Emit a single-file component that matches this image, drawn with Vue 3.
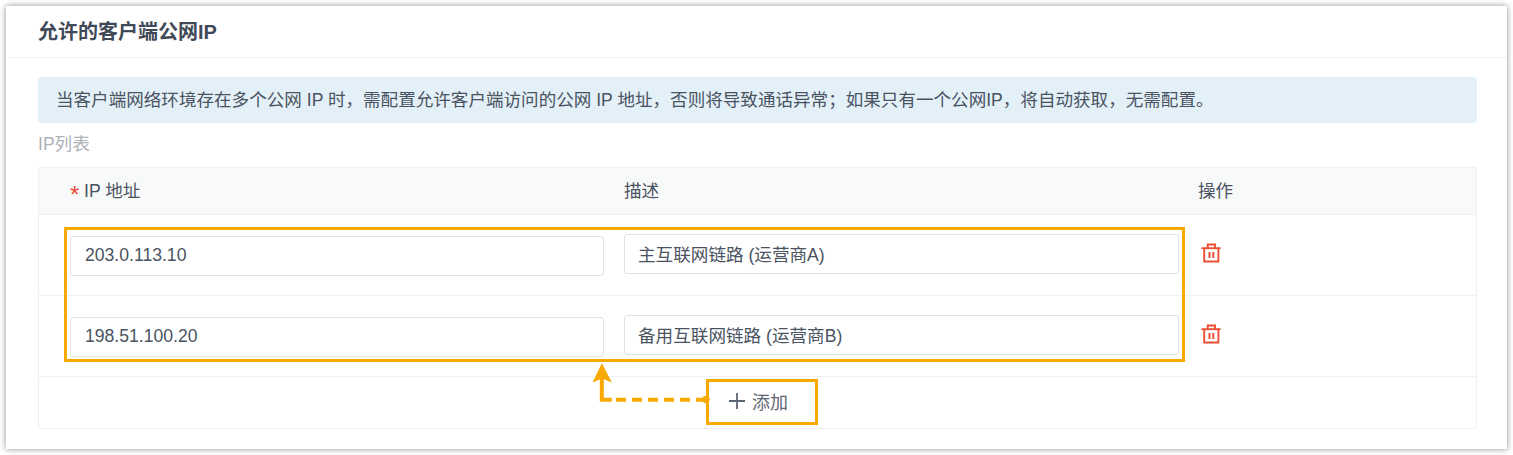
<script setup>
const rows = [
  { ip: '203.0.113.10', desc: '主互联网链路 (运营商A)' },
  { ip: '198.51.100.20', desc: '备用互联网链路 (运营商B)' },
]
</script>

<template>
  <section class="card">
    <h2 class="title">允许的客户端公网IP</h2>
    <div class="body">
      <div class="alert">当客户端网络环境存在多个公网 IP 时，需配置允许客户端访问的公网 IP 地址，否则将导致通话异常；如果只有一个公网IP，将自动获取，无需配置。</div>
      <div class="label">IP列表</div>
      <div class="table">
        <div class="grid head">
          <div class="cell-ip"><span class="star">*</span>IP 地址</div>
          <div>描述</div>
          <div class="cell-op">操作</div>
        </div>
        <div v-for="row in rows" :key="row.ip" class="grid row">
          <div class="cell-ip"><div class="input input-ip">{{ row.ip }}</div></div>
          <div><div class="input">{{ row.desc }}</div></div>
          <div class="cell-action">
            <svg class="trash" viewBox="0 0 20 20" width="20" height="20" fill="none" stroke="#ee4f33" stroke-width="1.9">
              <path d="M.4 5.2H19.6" />
              <path d="M6.7 5.2V1.5H14V5.2" />
              <path d="M3.2 5.2V18.5H17.4V5.2" />
              <path d="M8.5 9V15M12.3 9V15" stroke-width="2" />
            </svg>
          </div>
        </div>
        <div class="foot">
          <button class="add" type="button">
            <svg viewBox="0 0 16 16" width="16" height="16" stroke="#5f6673" stroke-width="1.8" fill="none">
              <path d="M8 0V16M0 8H16" />
            </svg>
            <span>添加</span>
          </button>
        </div>
        <div class="highlight"></div>
        <svg class="arrow" viewBox="0 0 130 50" width="130" height="50" fill="#f9aa00" stroke="none">
          <path d="M12.9 5.3L22.9 24.5L12.9 20.5L3.5 24.5Z" />
          <path d="M12.8 20V41.7H22.7" fill="none" stroke="#f9aa00" stroke-width="4" />
          <path d="M27 41.7H116" fill="none" stroke="#f9aa00" stroke-width="4" stroke-dasharray="10 6" />
          <circle cx="117" cy="41.5" r="3.7" />
        </svg>
      </div>
    </div>
  </section>
</template>

<style scoped>
.card {
  box-sizing: border-box;
  width: 1501px;
  height: 443px;
  margin: 6px;
  background: #fff;
  box-shadow: 0 0 6px rgba(0, 0, 0, 0.45);
  color: #4a5361;
  font-family: "Liberation Sans", "Noto Sans CJK SC", sans-serif;
  font-size: 17.6px;
}
.title {
  box-sizing: border-box;
  height: 52px;
  margin: 0 0 0 2px;
  padding: 0 0 0 30px;
  border-bottom: 1px solid #eef0f2;
  color: #3f4957;
  font-size: 20px;
  font-weight: 700;
  line-height: 53px;
}
.body {
  padding: 19px 30px 0 32px;
}
.alert {
  box-sizing: border-box;
  height: 46px;
  padding-left: 18px;
  border-radius: 3px;
  background: #e3f0f8;
  font-size: 17.57px;
  line-height: 46px;
}
.label {
  height: 44px;
  color: #adb1b8;
  line-height: 42px;
}
.table {
  position: relative;
  box-sizing: border-box;
  height: 262px;
  border: 1px solid #eef0f2;
  border-radius: 3px;
}
.grid {
  display: grid;
  grid-template-columns: 585px 575px 1fr;
  box-sizing: border-box;
  border-bottom: 1px solid #eef0f2;
}
.head {
  height: 47px;
  background: #f8f9f9;
  line-height: 46px;
}
.cell-op {
  margin-left: -1px;
}
.row {
  height: 81px;
  padding-top: 19px;
}
.cell-ip {
  padding-left: 31px;
}
.star {
  display: inline-block;
  width: 14px;
  color: #ee4b3a;
  font-size: 24px;
  line-height: 0;
  vertical-align: -6px;
}
.input {
  box-sizing: border-box;
  width: 555px;
  height: 40px;
  padding-left: 13px;
  border: 1px solid #e0e2e6;
  border-radius: 3px;
  line-height: 40px;
}
.input-ip {
  width: 534px;
  margin-top: 2px;
  padding-left: 14px;
  line-height: 36px;
}
.cell-action {
  padding: 9px 0 0 2px;
}
.trash {
  display: block;
}
.foot {
  display: flex;
  justify-content: center;
  padding: 2px 0 0 8px;
}
.add {
  display: flex;
  align-items: center;
  justify-content: center;
  gap: 7px;
  box-sizing: border-box;
  width: 112px;
  height: 46px;
  padding: 0 6px 2px 0;
  border: 3px solid #f9aa00;
  background: #fff;
  color: #5f6673;
  font: inherit;
  font-size: 18px;
}
.highlight {
  position: absolute;
  left: 25px;
  top: 59px;
  box-sizing: border-box;
  width: 1121px;
  height: 135px;
  border: 3px solid #f9aa00;
  pointer-events: none;
}
.arrow {
  position: absolute;
  left: 550px;
  top: 190px;
  pointer-events: none;
}
</style>
